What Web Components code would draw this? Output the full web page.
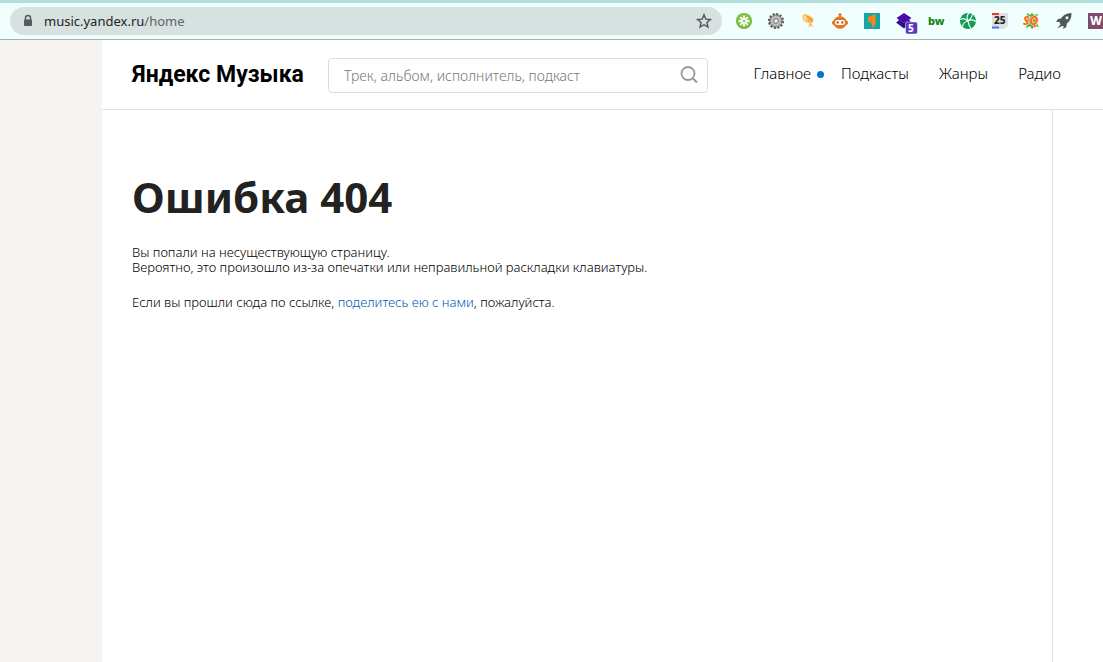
<!DOCTYPE html>
<html lang="ru">
<head>
<meta charset="utf-8">
<title>Яндекс Музыка</title>
<style>
html, body { margin: 0; }
body { font-family: "Noto Sans", "Open Sans", sans-serif; color: #000; background: #fff; overflow-x: hidden; }
</style>
</head>
<body>
<music-app></music-app>

<template id="t-app">
<style>
:host { display: flex; flex-direction: column; min-height: 100vh; }
.page { flex: 1; display: grid; grid-template-columns: 102px minmax(0, 1fr); }
.gutter { background: #f5f4f2; }
main { display: flex; flex-direction: column; min-width: 0; }
.body { flex: 1; display: grid; grid-template-columns: minmax(0, 1fr) 51px; }
.side { border-left: 1px solid #e2e2e2; }
</style>
<browser-bar></browser-bar>
<div class="page">
  <div class="gutter"></div>
  <main>
    <site-header></site-header>
    <div class="body">
      <error-message>
        <span slot="title">Ошибка 404</span>
      </error-message>
      <div class="side"></div>
    </div>
  </main>
</div>
</template>

<template id="t-bar">
<style>
:host { display: flex; box-sizing: border-box; height: 40px; padding: 4px 0 4px 10px; border-top: 3px solid #aedfdb; border-bottom: 1px solid #a0b4b2; background: #f0fffe; overflow: hidden; }
.address { flex: 1; min-width: 0; height: 28px; display: flex; align-items: center; padding: 0 10px 0 12px; border-radius: 14px; background: #d6e1e0; box-sizing: border-box; }
.lock { width: 12px; height: 14px; margin-right: 10px; flex: none; }
.url { flex: 1; font-size: 13px; line-height: 18px; color: #5d6665; white-space: nowrap; }
.url b { font-weight: 400; color: #202524; }
button { border: 0; padding: 0; background: none; display: block; }
.star { width: 16px; height: 16px; }
.ext { flex: 0 0 381px; display: flex; align-items: center; gap: 16px; padding-left: 14px; box-sizing: border-box; overflow: hidden; }
.ext button { flex: none; width: 16px; height: 16px; }
svg { display: block; overflow: visible; }
text { font-family: "Noto Sans", sans-serif; font-weight: 800; }
</style>
<div class="address">
  <svg class="lock" viewBox="0 0 12 14"><path d="M3.500 6V4a2.500 2.500 0 0 1 5 0v2" fill="none" stroke="#555d5c" stroke-width="1.500"/><rect x="2" y="5.500" width="8" height="6.500" rx=".8" fill="#555d5c"/></svg>
  <span class="url"><b>music.yandex.ru</b>/home</span>
  <button class="star" aria-label="Добавить в закладки"><svg width="16" height="16" viewBox="0 0 16 16"><path d="M8 1.800l1.800 4.300 4.600.4-3.500 3 1.100 4.600L8 11.700l-4 2.400 1.100-4.600-3.500-3 4.600-.4z" fill="none" stroke="#505857" stroke-width="1.400"/></svg></button>
</div>
<div class="ext">
  <button aria-label="Цветок"><svg width="16" height="16" viewBox="0 0 16 16"><circle cx="8" cy="8" r="8" fill="#6fb63a"/><circle cx="8" cy="7.500" r="6.800" fill="#86c74b"/><path d="M8 3.300v9.400M3.300 8h9.400M4.700 4.700l6.600 6.600M11.300 4.700l-6.600 6.600" stroke="#fff" stroke-width="1.800" stroke-linecap="round"/><circle cx="8" cy="8" r="1.300" fill="#8dc657"/></svg></button>
  <button aria-label="Шестерня"><svg width="16" height="16" viewBox="0 0 16 16"><circle cx="8" cy="8" r="7" fill="none" stroke="#555" stroke-width="2" stroke-dasharray="2.200 1.460"/><circle cx="8" cy="8" r="6" fill="#c6c6c6" stroke="#6b6b6b"/><circle cx="8" cy="8" r="4.600" fill="none" stroke="#9a9a9a" stroke-width="1" stroke-dasharray="1.500 1.500"/><circle cx="8" cy="8" r="2.900" fill="#888"/><circle cx="8" cy="8" r="1.700" fill="#f4f4f4"/></svg></button>
  <button aria-label="Жёлтая птица"><svg width="16" height="16" viewBox="0 0 16 16"><path d="M2.500 3.500C3 .8 6 .5 8 2l3.300 2c2.300 1 2.800 3.400 1.700 5.500l-2 .8 2.700 4-3.200-1.500-1.700 2.200.3-5C5 10 2 7 2.500 3.500z" fill="#fcc065"/><path d="M5 3v4" stroke="#fff0cc" stroke-width="1.200" fill="none"/><path d="M7 3.500c3 0 3.500 2.500 1.500 4.500M10.500 5c1.500 1 1.500 2.500.5 4" stroke="#f09a2e" fill="none" stroke-width="1.400"/></svg></button>
  <button aria-label="Робот"><svg width="16" height="16" viewBox="0 0 16 16"><circle cx="8" cy="1.500" r="1.500" fill="#e37624"/><path d="M8 2v3" stroke="#e37624" stroke-width="1.200"/><rect x="0" y="7.500" width="16" height="4.500" rx="2" fill="#e37624"/><ellipse cx="8" cy="9.500" rx="6.600" ry="6.300" fill="#e37624"/><rect x="3" y="7" width="10" height="5" rx="2.500" fill="#fff"/><circle cx="5.700" cy="9.500" r="1.200" fill="#c95f16"/><circle cx="10.300" cy="9.500" r="1.200" fill="#c95f16"/></svg></button>
  <button aria-label="Лента"><svg width="16" height="16" viewBox="0 0 16 16"><path d="M0 0h16v16H0z" fill="#17a4a8"/><path d="M4 4l7.500-3v10.500L8 15l-.5-5L4 8.500z" fill="#f3871e"/><path d="M4 8.500l3.500-2V10z" fill="#c68b38"/></svg></button>
  <button aria-label="Слои, 5"><svg width="16" height="16" viewBox="0 0 16 16"><path d="M8 0l7.500 5L8 10 .5 5z" fill="#4a09a9"/><path d="M0 9.500l3-2L8 11l5-3.500 3 2L8 15.500z" fill="#3a0a98"/><path d="M2.500 6.300L8 10l5.500-3.700v2L8 12 2.500 8.300z" fill="#2a067a"/><rect x="9.500" y="9" width="12" height="12" rx="2" fill="#6034bd" stroke="#f0fffe" stroke-width=".5"/><text x="12" y="19" font-size="10" fill="#fff">5</text></svg></button>
  <button aria-label="bw"><svg width="16" height="16" viewBox="0 0 16 16"><text x="0" y="12" font-size="11" fill="#128312">bw</text></svg></button>
  <button aria-label="Глобус"><svg width="16" height="16" viewBox="0 0 16 16"><circle cx="8" cy="8" r="8" fill="#159b56"/><path d="M9 0C6.500 2.500 6.500 5 8 8 5.500 5.500 3 5 .5 6.500M16 8.500C13 6 10.500 6.500 8 8c2.500-2 4-3.500 4.500-6.500M8 8c.3 3 1 5 3 7.500M8 8c-3 .5-5 2.500-5.500 5.500" fill="none" stroke="#f0fffe" stroke-width="1.200"/></svg></button>
  <button aria-label="Календарь, 25"><svg width="16" height="16" viewBox="0 0 16 16"><path d="M0 0h16v16H0z" fill="#dddfe1"/><path d="M0 0h7v2H0z" fill="#e53935"/><path d="M0 13.500h7v2H0z" fill="#3d80ef"/><path d="M12 16l4-4v4z" fill="#f6f6f6"/><text x="2" y="11" font-size="10" fill="#222">25</text></svg></button>
  <button aria-label="SQ"><svg width="16" height="16" viewBox="0 0 16 16"><path d="M3 0l3 2 2-2 2 2 4-1-1 3 2 3-2 3 2 4-4-1-3 3-2-3-4 2 1-4-2-2 2-3z" fill="#62a636"/><text x="-1" y="12" font-size="12" font-style="italic" fill="#ff6a13" stroke="#fff" stroke-width="1" paint-order="stroke">SQ</text></svg></button>
  <button aria-label="Ракета"><svg width="16" height="16" viewBox="0 0 16 16"><path d="M15.500 0C10 .2 7 2.500 5 5.500L2 6 0 9l3.300-.3 1.200 2.700L1 15.500l5-2.500 1.500 0L7.300 16l3-2 .5-3.500C14 8 15.700 5 15.500 0z" fill="#50575a"/><circle cx="11" cy="4.800" r="1.500" fill="#f0fffe"/></svg></button>
  <button aria-label="W"><svg width="16" height="16" viewBox="0 0 16 16"><path d="M0 0h16v16H0z" fill="#804a68"/><text x="2" y="12" font-size="12" fill="#fff">W</text></svg></button>
</div>
</template>

<template id="t-header">
<style>
:host { display: flex; align-items: center; box-sizing: border-box; height: 70px; padding: 0 42px 0 30px; border-bottom: 1px solid #e2e2e2; }
a { color: inherit; text-decoration: none; white-space: nowrap; }
.logo { flex: 0 0 196px; font: 700 23px/32px Roboto, "Noto Sans", sans-serif; color: #000; }
form { position: relative; flex: 0 1 380px; min-width: 0; margin: 2px 0 0; }
input { display: block; width: 100%; height: 35px; box-sizing: border-box; border: 1px solid #ddd; border-radius: 4px; background: #fff; padding: 0 40px 0 15px; font: 300 14px "Noto Sans", sans-serif; outline: 0; }
input::placeholder { color: #777; opacity: 1; }
form button { position: absolute; right: 9px; top: 7px; width: 20px; height: 20px; border: 0; padding: 0; background: none; }
form svg { display: block; }
nav { display: flex; gap: 30px; margin-left: auto; padding: 0 0 4px 20px; font-size: 15px; line-height: 20px; font-weight: 300; }
.new { position: relative; }
.new::after { content: ""; position: absolute; right: -13px; top: 8px; width: 7px; height: 7px; border-radius: 50%; background: #0077c8; }
</style>
<a class="logo" href="#">Яндекс Музыка</a>
<form>
  <input type="text" aria-label="Поиск" placeholder="Трек, альбом, исполнитель, подкаст">
  <button type="button" aria-label="Найти"><svg width="20" height="20" viewBox="0 0 20 20" fill="none" stroke="#999" stroke-width="1.800"><circle cx="9" cy="8.500" r="6.500"/><path d="M13.500 13l4.500 4.500" stroke-width="2"/></svg></button>
</form>
<nav>
  <a class="new" href="#">Главное</a>
  <a href="#">Подкасты</a>
  <a href="#">Жанры</a>
  <a href="#">Радио</a>
</nav>
</template>

<template id="t-error">
<style>
:host { display: block; padding: 57px 30px 30px; }
h1 { margin: 0 0 18px; font-size: 42px; line-height: 60px; font-weight: 700; color: #222; }
p { margin: 0 0 20px; font-size: 13px; line-height: 15px; font-weight: 300; }
a { color: #0059b3; text-decoration: none; }
</style>
<h1><slot name="title"></slot></h1>
<p>Вы попали на несуществующую страницу.<br>Вероятно, это произошло из-за опечатки или неправильной раскладки клавиатуры.</p>
<p>Если вы прошли сюда по ссылке, <a href="#">поделитесь ею с нами</a>, пожалуйста.</p>
</template>

<script>
const define = (name, templateId) => customElements.define(name, class extends HTMLElement {
  constructor() {
    super();
    this.attachShadow({ mode: "open" }).append(document.getElementById(templateId).content.cloneNode(true));
  }
});
define("browser-bar", "t-bar");
define("site-header", "t-header");
define("error-message", "t-error");
define("music-app", "t-app");
</script>
</body>
</html>
